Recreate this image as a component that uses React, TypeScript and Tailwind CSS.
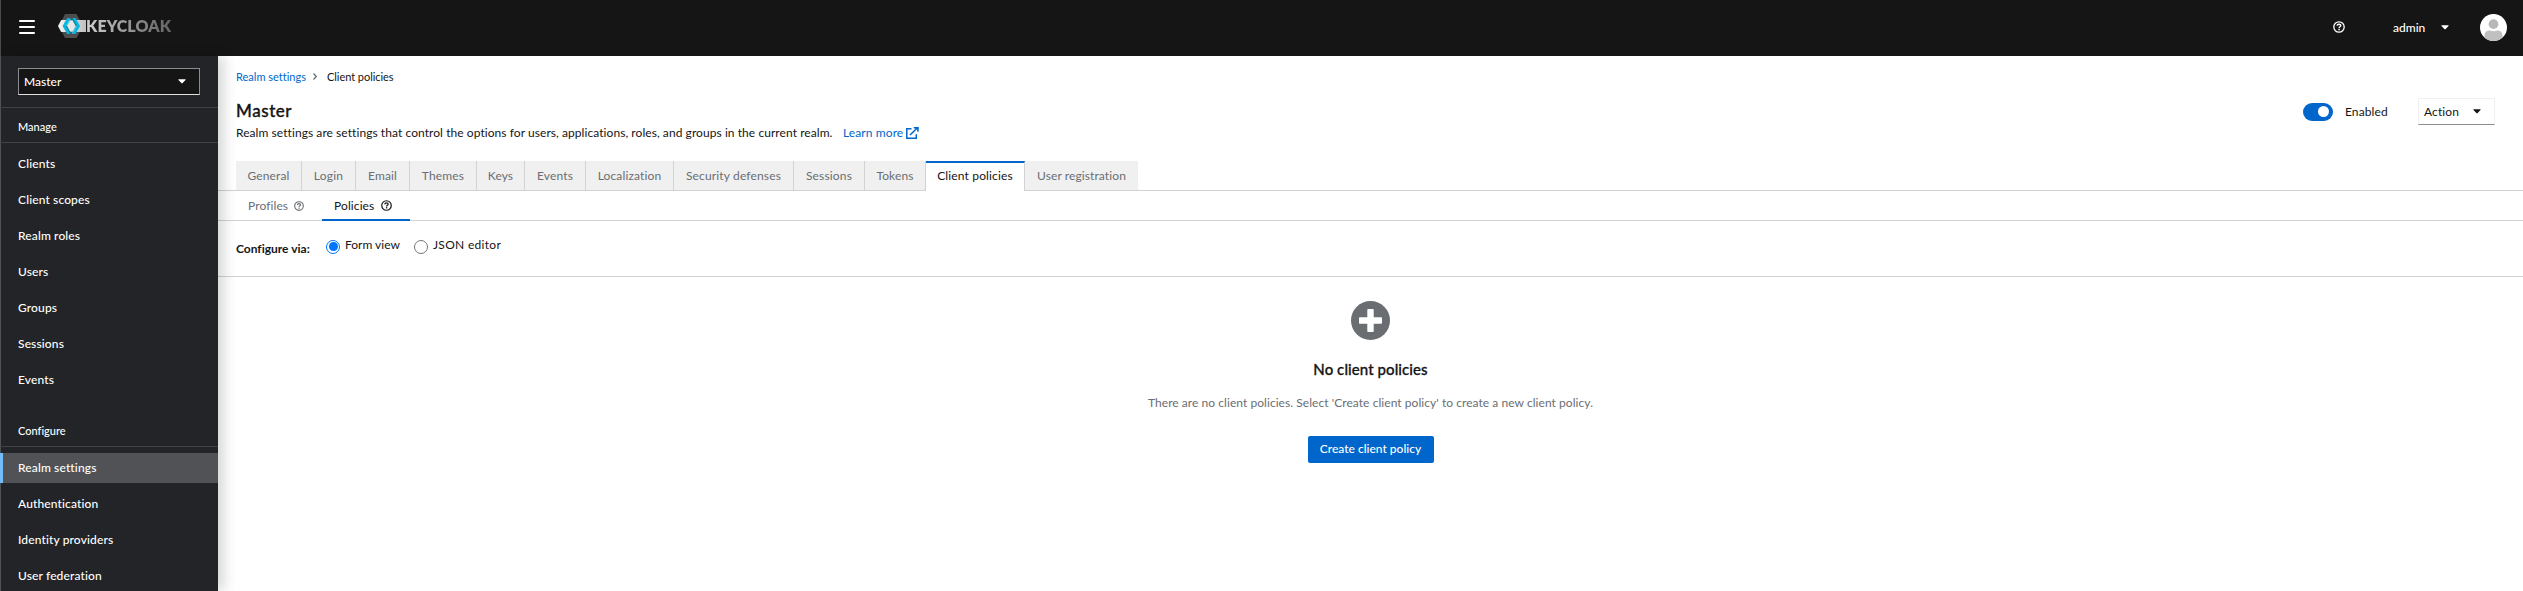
import React from "react";

type NavItem = { label: string; active?: boolean };

const manage: NavItem[] = [
  { label: "Clients" },
  { label: "Client scopes" },
  { label: "Realm roles" },
  { label: "Users" },
  { label: "Groups" },
  { label: "Sessions" },
  { label: "Events" },
];

const configure: NavItem[] = [
  { label: "Realm settings", active: true },
  { label: "Authentication" },
  { label: "Identity providers" },
  { label: "User federation" },
];

const tabs = [
  { label: "General", cls: "w-[66px] tracking-[0.15px]" },
  { label: "Login", cls: "w-[54px] tracking-[0.25px]" },
  { label: "Email", cls: "w-[54px] tracking-[0.15px]" },
  { label: "Themes", cls: "w-[67px] tracking-[0.15px]" },
  { label: "Keys", cls: "w-[48px] tracking-[0.1px]" },
  { label: "Events", cls: "w-[61px] tracking-[0.15px]" },
  { label: "Localization", cls: "w-[88px] tracking-[0.15px]" },
  { label: "Security defenses", cls: "w-[120px] tracking-[0.15px]" },
  { label: "Sessions", cls: "w-[71px] tracking-[0.15px]" },
  { label: "Tokens", cls: "w-[61px] tracking-[0.1px]" },
  { label: "Client policies", cls: "w-[99px] tracking-[0.15px]", active: true },
  { label: "User registration", cls: "w-[113px] tracking-[0.1px]", last: true },
];

function Caret({ className }: { className?: string }) {
  return (
    <svg className={className} width="8" height="5" viewBox="0 0 8 5" fill="currentColor">
      <path d="M0.8 0.3H7.2C7.6 0.3 7.8 0.8 7.5 1.1L4.4 4.2C4.2 4.4 3.8 4.4 3.6 4.2L0.5 1.1C0.2 0.8 0.4 0.3 0.8 0.3Z" />
    </svg>
  );
}

function Help({ size, className }: { size: number; className?: string }) {
  return (
    <svg className={className} width={size} height={size} viewBox="0 0 12 12" fill="none" stroke="currentColor">
      <circle cx="6" cy="6" r="5.2" strokeWidth="1.3" />
      <path d="M4.1 4.8C4.2 3.7 5 3.2 6 3.2C7 3.2 7.8 3.8 7.8 4.7C7.8 5.8 6.1 5.8 6.1 7" strokeWidth="1.4" />
      <path d="M6.1 7.8V9.2" strokeWidth="1.5" />
    </svg>
  );
}

function Logo() {
  return (
    <div className="flex items-center">
      <svg width="28" height="24" viewBox="0 0 28 24">
        <defs>
          <linearGradient id="bar" x1="0" y1="0" x2="1" y2="0">
            <stop offset="0" stopColor="#f2f2f2" />
            <stop offset="1" stopColor="#c0c0c0" />
          </linearGradient>
        </defs>
        <path d="M7 0H18.5L25 12L18.5 24H7L1 12Z" fill="#4d4d4d" />
        <path d="M3.2 6H28V18H3.2L0 12Z" fill="url(#bar)" />
        <path d="M8.6 6H17.6L21.4 12L17.6 18H8.6L5.2 12Z" fill="#8a8a8a" />
        <path d="M11.2 6.6H15.4L18.6 12L15.4 17.4H11.2L8 12Z" fill="#e6e6e6" />
        <path d="M9.2 3.9H12L7.6 12L12 20.1H9.2L4.6 12Z" fill="#00b8e3" />
        <path d="M12 3.9L12.8 5.3L9.1 12H7.6Z" fill="#33c6e9" />
        <path d="M7.6 12H9.1L12.8 18.7L12 20.1Z" fill="#008aaa" />
        <path d="M14.7 3.9H17.5L22 12L17.5 20.1H14.7L19.1 12Z" fill="#00b8e3" />
        <path d="M14.7 3.9L13.9 5.3L17.6 12H19.1Z" fill="#008aaa" />
        <path d="M19.1 12H17.6L13.9 18.7L14.7 20.1Z" fill="#33c6e9" />
      </svg>
      <span className="bg-gradient-to-r from-[#cfcfcf] to-[#636363] bg-clip-text text-[16px] leading-[24px] font-extrabold tracking-[0.1px] text-transparent">
        KEYCLOAK
      </span>
    </div>
  );
}

function NavGroup({ title, items }: { title: string; items: NavItem[] }) {
  return (
    <div>
      <div className="flex h-[35px] items-center border-b border-[#3f4145] pt-[3px] pl-[18px] text-[11px] font-medium">
        {title}
      </div>
      <div className="flex flex-col gap-[6px] pt-[6px]">
        {items.map((i) => (
          <div
            key={i.label}
            className={`flex h-[30px] items-center text-[12px] font-medium tracking-[0.13px] ${
              i.active ? "border-l-[3px] border-[#73bcf7] bg-[#515255] pl-[15px]" : "pl-[18px]"
            }`}
          >
            {i.label}
          </div>
        ))}
      </div>
    </div>
  );
}

function Radio({ checked }: { checked?: boolean }) {
  return (
    <span
      className={`flex size-[14px] items-center justify-center rounded-full border ${
        checked ? "border-[#0075ff]" : "border-[#767676]"
      }`}
    >
      {checked && <span className="size-[9px] rounded-full bg-[#0075ff]" />}
    </span>
  );
}

export default function App() {
  return (
    <div className="flex h-[591px] w-[2523px] flex-col overflow-hidden bg-white font-['Lato','Liberation_Sans',sans-serif] text-[12px] leading-[18px] whitespace-nowrap text-[#151515] [font-variant-ligatures:none]">
      <header className="flex h-[56px] shrink-0 items-center border-l border-[#4a4a4a] bg-[#151515] pb-[2px] text-white">
        <div className="ml-[18px] flex w-[16px] flex-col gap-[4px]">
          <span className="h-[2px] rounded-full bg-white" />
          <span className="h-[2px] rounded-full bg-white" />
          <span className="h-[2px] rounded-full bg-white" />
        </div>
        <div className="-mt-[2px] ml-[23px]">
          <Logo />
        </div>
        <div className="ml-auto flex items-center pr-[16px]">
          <Help size={12} />
          <span className="ml-[48px] w-[32px] pt-[1px] font-medium">admin</span>
          <Caret className="ml-[16px]" />
          <svg className="ml-[31px]" width="27" height="27" viewBox="0 0 36 36">
            <clipPath id="face">
              <circle cx="18" cy="18" r="18" />
            </clipPath>
            <g clipPath="url(#face)">
              <rect width="36" height="36" fill="#fff" />
              <circle cx="18" cy="13.5" r="6.5" fill="#b8b8b8" />
              <path d="M6 36V29C6 24 9 22 13 22C16 23.4 20 23.4 23 22C27 22 30 24 30 29V36Z" fill="#c0c0c0" />
            </g>
          </svg>
        </div>
      </header>

      <div className="flex min-h-0 flex-1">
        <nav className="relative z-10 w-[218px] shrink-0 bg-[#232428] text-white shadow-[6px_0_12px_rgba(3,3,3,0.16)]">
          <div className="flex h-[52px] items-center border-b border-[#3f4145] pl-[18px]">
            <div className="flex h-[27px] w-[182px] items-center justify-between border border-[#8a8d90] border-b-[#e0e0e0] bg-[#151515] pr-[13px] pl-[5px] font-medium">
              Master
              <Caret />
            </div>
          </div>
          <NavGroup title="Manage" items={manage} />
          <div className="h-[17px]" />
          <NavGroup title="Configure" items={configure} />
          <span className="absolute top-0 left-0 -z-10 h-full w-px bg-[#4f5255]" />
        </nav>

        <main className="flex min-w-0 flex-1 flex-col">
          <div className="flex h-[105px] shrink-0 flex-col pl-[18px]">
            <div className="mt-[12px] flex h-[17px] items-center text-[11px]">
              <span className="w-[68px] text-[#0066cc]">Realm settings</span>
              <svg className="ml-[9px]" width="4" height="7" viewBox="0 0 4 7" fill="none" stroke="#6a6e73" strokeWidth="1.2">
                <path d="M0.5 0.5L3.3 3.5L0.5 6.5" />
              </svg>
              <span className="ml-[10px] tracking-[-0.05px]">Client policies</span>
            </div>
            <div className="flex justify-between pr-[28px]">
              <div className="pt-[14px]">
                <h1 className="text-[17px] leading-[24px] font-medium tracking-[0.55px] [-webkit-text-stroke:0.35px]">Master</h1>
                <p className="mt-[1px] flex items-center">
                  <span className="w-[607px] tracking-[0.065px]">
                    Realm settings are settings that control the options for users, applications, roles, and groups in the current realm.
                  </span>
                  <a className="flex items-center text-[#0066cc]">
                    <span className="w-[63px] tracking-[0.1px]">Learn more</span>
                    <svg width="13" height="12" viewBox="0 0 13 12" fill="none" stroke="#0066cc" strokeWidth="1.5">
                      <path d="M5.5 1.7H0.8V11.2H10.3V7.3M4 8L11 1.2M7.8 0.8H12V4.8" />
                    </svg>
                  </a>
                </p>
              </div>
              <div className="mt-[13px] flex h-[27px] items-center">
                <span className="flex h-[18px] w-[30px] items-center justify-end rounded-full bg-[#0066cc] pr-[4px]">
                  <span className="size-[11px] rounded-full bg-white" />
                </span>
                <span className="ml-[12px] w-[73px] tracking-[0.1px]">Enabled</span>
                <div className="flex h-[27px] w-[77px] items-center justify-between border border-[#f0f0f0] border-b-[#8a8d90] pr-[13px] pl-[5px]">
                  <span className="tracking-[0.1px]">Action</span>
                  <Caret className="-mt-[1px]" />
                </div>
              </div>
            </div>
          </div>

          <div className="flex h-[30px] shrink-0 items-stretch">
            <div className="w-[18px] border-b border-[#d2d2d2]" />
            {tabs.map((t) => (
              <div
                key={t.label}
                className={`flex items-center justify-center ${t.cls} ${
                  t.active
                    ? "border-t-2 border-r border-t-[#0066cc] border-r-[#d2d2d2] bg-white pb-[3px] text-[#151515]"
                    : t.last
                      ? "border-b border-[#d2d2d2] bg-[#f0f0f0] text-[#6a6e73]"
                      : "border-r border-b border-[#d2d2d2] bg-[#f0f0f0] text-[#6a6e73]"
                }`}
              >
                {t.label}
              </div>
            ))}
            <div className="flex-1 border-b border-[#d2d2d2]" />
          </div>

          <div className="flex h-[30px] shrink-0 border-b border-[#d2d2d2] pl-[18px]">
            <div className="flex w-[86px] items-center pl-[12px] text-[#6a6e73]">
              <span className="w-[46px] tracking-[0.1px]">Profiles</span>
              <Help size={10} />
            </div>
            <div className="flex h-[30px] w-[88px] items-center border-b-2 border-[#0066cc] pt-[2px] pl-[12px]">
              <span className="w-[47px] tracking-[0.1px]">Policies</span>
              <Help size={11} className="-mt-[1px]" />
            </div>
          </div>

          <div className="flex h-[56px] shrink-0 items-center border-b border-[#d2d2d2] pb-[4px] pl-[18px]">
            <span className="w-[90px] pt-[5px] font-bold">Configure via:</span>
            <Radio checked />
            <span className="-mt-[3px] ml-[5px] w-[69px]">Form view</span>
            <Radio />
            <span className="-mt-[3px] ml-[5px] tracking-[0.3px]">JSON editor</span>
          </div>

          <div className="flex flex-col items-center pt-[24px]">
            <svg width="39" height="39" viewBox="0 0 39 39">
              <circle cx="19.5" cy="19.5" r="19.5" fill="#6a6e73" />
              <path
                d="M17.3 8H21.7C22.4 8 22.7 8.4 22.7 9V16.3H30C30.6 16.3 31 16.7 31 17.3V21.7C31 22.3 30.6 22.7 30 22.7H22.7V30C22.7 30.6 22.3 31 21.7 31H17.3C16.7 31 16.3 30.6 16.3 30V22.7H9C8.4 22.7 8 22.3 8 21.7V17.3C8 16.7 8.4 16.3 9 16.3H16.3V9C16.3 8.4 16.7 8 17.3 8Z"
                fill="#fff"
              />
            </svg>
            <h2 className="mt-[17px] text-[15px] leading-[24px] font-medium tracking-[0.08px] [-webkit-text-stroke:0.3px]">
              No client policies
            </h2>
            <p className="mt-[13px] tracking-[0.055px] text-[#6a6e73]">
              There are no client policies. Select 'Create client policy' to create a new client policy.
            </p>
            <button className="mt-[24px] flex h-[27px] w-[126px] items-center justify-center rounded-[2px] bg-[#0066cc] pb-[2px] font-medium text-white">
              Create client policy
            </button>
          </div>
        </main>
      </div>
    </div>
  );
}
